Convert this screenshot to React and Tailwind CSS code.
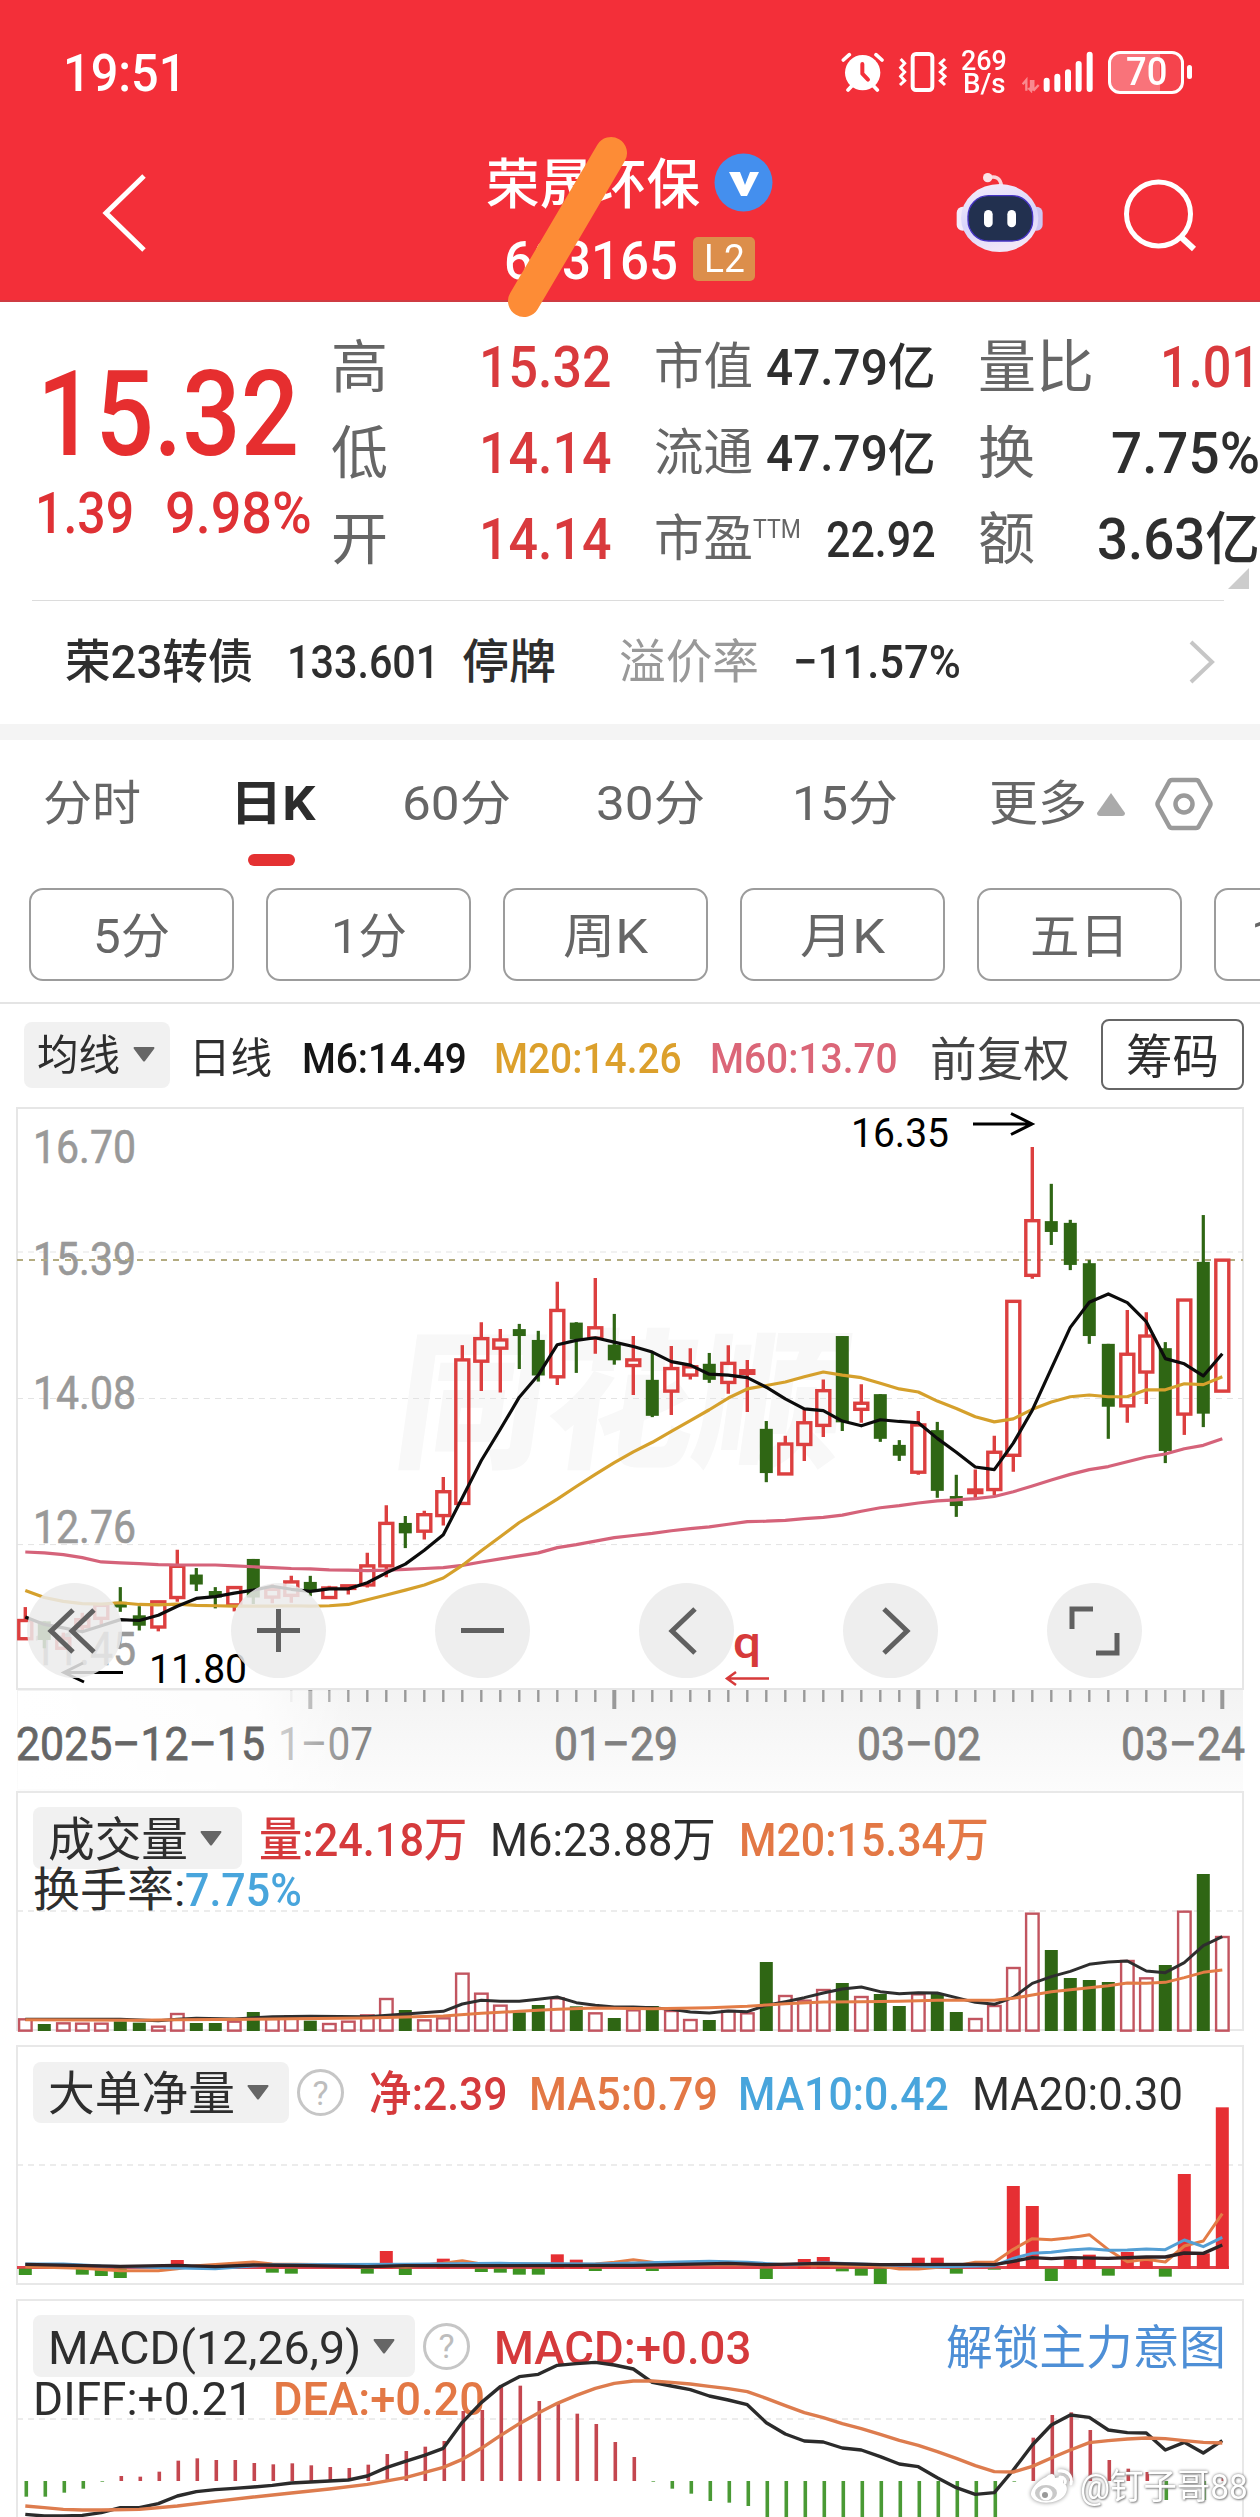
import { useLayoutEffect, useRef, useState } from "react";

const STEP = 19;
const X0 = 25.3;
const cx = (i) => X0 + i * STEP;

const RED = "#dc3f3f";
const GREEN = "#2f6614";

// [up, bodyTop, bodyBottom, high, low]
const candles = [
    [1, 1198, 1240, 1167, 1240], [0, 1200, 1243, 1200, 1262], [1, 1240, 1262, 1226, 1262],
    [1, 1196, 1212, 1180, 1225], [1, 1163, 1193, 1163, 1210], [0, 1155, 1168, 1121, 1178],
    [0, 1186, 1210, 1165, 1221], [1, 1155, 1213, 1155, 1223], [1, 1073, 1145, 1035, 1155],
    [0, 1092, 1115, 1077, 1130], [0, 1130, 1145, 1121, 1170], [1, 1122, 1162, 1122, 1177],
    [0, 1056, 1145, 1056, 1160], [1, 1126, 1144, 1115, 1158], [1, 1109, 1140, 1095, 1157],
    [0, 1109, 1130, 1095, 1142], [1, 1123, 1145, 1118, 1145], [1, 1118, 1124, 1118, 1138],
    [1, 1072, 1116, 1042, 1122], [1, 974, 1072, 932, 1098], [0, 973, 997, 957, 1031],
    [1, 954, 992, 945, 1011], [1, 901, 956, 867, 979], [1, 597, 928, 563, 928],
    [1, 548, 600, 510, 669], [1, 551, 570, 526, 672], [0, 526, 542, 514, 618],
    [0, 551, 633, 530, 647], [1, 483, 636, 417, 655], [0, 511, 550, 510, 627],
    [1, 523, 547, 408, 583], [0, 562, 598, 491, 608], [1, 597, 610, 542, 678],
    [0, 643, 726, 578, 729], [1, 617, 669, 565, 724], [1, 613, 632, 570, 642],
    [0, 606, 643, 581, 650], [1, 605, 649, 563, 675], [1, 622, 628, 597, 717],
    [0, 756, 858, 738, 879], [1, 791, 860, 772, 860], [1, 742, 792, 710, 830],
    [1, 668, 748, 642, 775], [0, 542, 741, 542, 761], [1, 697, 711, 653, 742],
    [0, 676, 779, 676, 786], [0, 793, 818, 782, 830], [1, 747, 856, 715, 862],
    [0, 759, 899, 740, 915], [0, 911, 934, 862, 959], [1, 897, 903, 850, 918],
    [1, 810, 896, 772, 910], [1, 462, 817, 462, 855], [1, 276, 402, 106, 410],
    [0, 277, 302, 191, 332], [0, 281, 378, 274, 390], [0, 374, 542, 367, 560],
    [0, 560, 705, 560, 779], [1, 584, 703, 482, 742], [1, 542, 625, 487, 699],
    [0, 570, 807, 556, 835], [1, 459, 722, 459, 770], [0, 371, 721, 263, 752],
    [1, 367, 669, 367, 669],
];

const ma6 = [1190, 1207, 1215, 1224, 1210, 1196, 1198, 1186, 1165, 1147, 1143, 1135, 1128, 1119, 1126, 1131, 1125, 1125, 1111, 1088, 1068, 1036, 1000, 915, 829, 757, 683, 632, 562, 552, 546, 556, 566, 579, 601, 609, 630, 632, 638, 660, 687, 710, 714, 738, 749, 735, 739, 742, 778, 810, 844, 850, 789, 713, 617, 522, 464, 445, 465, 509, 594, 606, 634, 583];
const ma20 = [1129, 1145, 1154, 1159, 1160, 1157, 1161, 1162, 1160, 1163, 1164, 1165, 1165, 1165, 1164, 1165, 1164, 1161, 1150, 1139, 1128, 1116, 1100, 1071, 1037, 1005, 972, 945, 918, 889, 861, 834, 809, 787, 762, 737, 712, 685, 664, 656, 648, 636, 625, 632, 638, 651, 664, 671, 692, 709, 728, 740, 733, 711, 694, 682, 678, 682, 682, 666, 666, 652, 654, 636];
const ma60 = [1040, 1042, 1046, 1053, 1063, 1065, 1067, 1069, 1070, 1070, 1070, 1072, 1074, 1076, 1078, 1079, 1081, 1082, 1083, 1082, 1080, 1078, 1076, 1071, 1063, 1056, 1049, 1042, 1030, 1023, 1015, 1007, 1002, 997, 991, 986, 982, 976, 970, 969, 967, 963, 960, 955, 946, 938, 933, 927, 922, 920, 917, 912, 901, 888, 874, 861, 850, 843, 832, 821, 814, 802, 794, 779];

// volume: [up, top]
const volumes = [
    [1, 715], [0, 732], [1, 727], [1, 728], [1, 728], [0, 724], [0, 728], [1, 737],
    [1, 699], [0, 729], [0, 729], [1, 722], [0, 696], [1, 714], [1, 706], [0, 722],
    [1, 729], [1, 722], [1, 703], [1, 654], [0, 690], [1, 718], [1, 712], [1, 578],
    [1, 638], [1, 674], [0, 697], [0, 675], [1, 652], [0, 679], [1, 697], [0, 714],
    [1, 688], [0, 678], [1, 690], [1, 717], [0, 720], [1, 690], [1, 697], [0, 546],
    [1, 645], [1, 659], [1, 627], [0, 609], [1, 648], [0, 642], [0, 678], [1, 640],
    [0, 642], [0, 696], [1, 714], [1, 675], [1, 561], [1, 398], [0, 510], [0, 594],
    [0, 600], [0, 606], [1, 540], [1, 592], [0, 555], [1, 392], [0, 282], [1, 468],
];
const vol6 = [[0, 718], [5, 718], [7, 722], [8, 718], [9, 715], [11, 717], [13, 710], [15, 709], [18, 710], [20, 702], [22, 694], [23, 672], [24, 661], [25, 664], [26, 664], [27, 658], [28, 651], [29, 668], [30, 676], [31, 681], [32, 681], [33, 683], [34, 688], [35, 696], [36, 699], [37, 693], [38, 695], [39, 676], [40, 665], [41, 653], [42, 639], [43, 627], [44, 621], [45, 635], [46, 641], [47, 638], [48, 639], [49, 653], [50, 667], [51, 673], [52, 652], [53, 610], [54, 590], [55, 574], [56, 553], [57, 546], [58, 543], [59, 573], [60, 578], [61, 548], [62, 497], [63, 470]];
const vol20 = [[0, 719], [6, 721], [8, 719], [12, 718], [14, 716], [18, 714], [20, 711], [22, 708], [24, 700], [26, 694], [28, 688], [30, 684], [33, 686], [36, 683], [38, 679], [39, 675], [40, 671], [42, 666], [44, 665], [46, 664], [48, 661], [51, 661], [52, 655], [53, 645], [54, 635], [55, 629], [56, 623], [57, 617], [58, 609], [59, 610], [60, 607], [61, 593], [62, 577], [63, 570]];

// big order net: index -> value, above 446 is inflow
const net = [[0, 465], [3, 464], [4, 468], [5, 474], [8, 420], [11, 428], [13, 458], [14, 461], [18, 461], [19, 393], [20, 465], [22, 416], [24, 456], [25, 458], [26, 464], [27, 464], [28, 403], [29, 419], [30, 453], [33, 453], [39, 477], [41, 417], [42, 411], [43, 454], [44, 467], [45, 492], [47, 413], [48, 413], [49, 461], [51, 449], [52, 198], [53, 258], [54, 483], [55, 418], [56, 404], [57, 467], [58, 396], [59, 423], [60, 470], [61, 162], [62, 400], [63, -38]];
const net5 = [[0, 440], [3, 445], [5, 452], [7, 452], [8, 446], [9, 437], [11, 430], [12, 426], [13, 432], [18, 435], [20, 440], [22, 430], [23, 422], [24, 432], [28, 433], [30, 432], [31, 427], [32, 419], [33, 427], [34, 434], [40, 434], [45, 438], [46, 447], [47, 447], [49, 437], [50, 427], [51, 427], [52, 388], [53, 356], [54, 359], [55, 353], [56, 344], [57, 389], [58, 425], [59, 418], [60, 426], [61, 378], [62, 363], [63, 281]];
const net10 = [[0, 432], [2, 432], [4, 438], [8, 444], [10, 446], [13, 434], [20, 433], [25, 430], [30, 432], [36, 424], [38, 427], [40, 434], [42, 428], [45, 434], [48, 440], [51, 437], [52, 415], [53, 400], [54, 397], [55, 390], [56, 386], [57, 391], [58, 390], [59, 387], [60, 389], [61, 360], [62, 380], [63, 352]];
const net20 = [[0, 433], [5, 439], [8, 436], [10, 440], [12, 435], [15, 437], [18, 440], [20, 437], [25, 437], [32, 436], [37, 430], [39, 434], [42, 430], [45, 434], [50, 433], [51, 434], [52, 424], [53, 413], [54, 416], [55, 413], [57, 415], [59, 411], [60, 411], [61, 399], [62, 400], [63, 375]];

const macd = [1130, 1130, 1118, 1106, 1085, 1068, 1070, 1055, 1022, 1015, 1020, 1020, 1029, 1033, 1030, 1036, 1041, 1044, 1034, 1002, 993, 980, 963, 873, 870, 795, 797, 843, 846, 881, 912, 966, 1011, 1085, 1106, 1121, 1143, 1148, 1158, 1192, 1196, 1200, 1200, 1200, 1200, 1200, 1200, 1200, 1200, 1200, 1200, 1192, 1085, 953, 885, 877, 930, 1020, 1046, 1056, 1140, 1085, 1140, 1068];
const diff = [1183, 1188, 1188, 1186, 1178, 1163, 1163, 1151, 1128, 1115, 1109, 1105, 1101, 1096, 1089, 1086, 1083, 1080, 1068, 1043, 1024, 1006, 985, 907, 848, 800, 770, 763, 736, 731, 727, 735, 747, 787, 798, 809, 828, 840, 854, 908, 942, 963, 966, 984, 990, 1010, 1032, 1040, 1073, 1103, 1123, 1118, 1050, 975, 915, 885, 892, 930, 938, 939, 990, 967, 999, 962];
const dea = [[0, 1158], [1, 1163], [2, 1168], [3, 1170], [4, 1170], [6, 1168], [8, 1158], [10, 1144], [12, 1131], [14, 1119], [16, 1107], [18, 1093], [20, 1073], [22, 1042], [23, 1018], [24, 985], [25, 947], [26, 911], [27, 879], [28, 850], [29, 826], [30, 805], [31, 790], [32, 783], [33, 783], [34, 787], [35, 792], [36, 799], [37, 806], [38, 815], [39, 835], [40, 857], [41, 878], [42, 893], [43, 911], [44, 926], [45, 943], [46, 961], [47, 976], [48, 995], [49, 1015], [50, 1037], [51, 1055], [52, 1056], [53, 1039], [54, 1014], [55, 990], [56, 968], [57, 962], [58, 957], [59, 954], [60, 956], [61, 962], [62, 967], [63, 969]];

const toPoints = (data, y) =>
    data
        .map((d, i) => (Array.isArray(d) ? `${cx(d[0])},${y(d[1])}` : `${cx(i)},${y(d)}`))
        .join(" ");

// Condenses its text to a given width
function Fit({ w, className = "", children }) {
    const ref = useRef(null);
    const [k, setK] = useState(1);

    useLayoutEffect(() => {
        setK(w / ref.current.offsetWidth);
    }, [w]);

    return (
        <span className={`block shrink-0 whitespace-nowrap ${className}`} style={{ width: w }}>
            <span
                ref={ref}
                className="inline-block origin-left whitespace-nowrap"
                style={{ transform: `scaleX(${k})` }}
            >
                {children}
            </span>
        </span>
    );
}

function Line({ data, y, color, width = 3 }) {
    return (
        <polyline
            points={toPoints(data, y)}
            fill="none"
            stroke={color}
            strokeWidth={width}
            strokeLinejoin="round"
        />
    );
}

function Down({ className = "" }) {
    return (
        <svg className={`shrink-0 ${className}`} width="22" height="15" viewBox="0 0 22 15">
            <path d="M1 0h20q1 1 0 2L12 14q-1 1-2 0L1 2Q0 1 1 0Z" fill="#666" />
        </svg>
    );
}

function Help({ className = "" }) {
    return (
        <span
            className={`flex size-[47px] shrink-0 items-center justify-center rounded-full border-[3px] border-[#c6c6c6] text-[34px] leading-none text-[#bdbdbd] ${className}`}
        >
            ?
        </span>
    );
}

function StatusBar() {
    return (
        <div className="flex h-[144px] items-center pl-[63px] text-white">
            <Fit w={123} className="mt-[2px] text-[51px] font-medium leading-none">19:51</Fit>
            <svg className="ml-[655px]" width="43" height="40" viewBox="33 36 129 120">
                <circle cx="98" cy="98" r="53" fill="#fff" />
                <path d="M40 60L58 44M156 60L138 44M54 150l12-13M142 150l-12-13" stroke="#fff" strokeWidth="11" strokeLinecap="round" />
                <path d="M97 72v29l17 18" fill="none" stroke="#f32f39" strokeWidth="12" strokeLinecap="round" strokeLinejoin="round" />
            </svg>
            <svg className="ml-[14px]" width="50" height="40" viewBox="203 36 150 120">
                <rect x="247" y="42" width="59" height="108" rx="10" fill="none" stroke="#fff" strokeWidth="12" />
                <path d="M211 57l12 13-12 13 12 13-12 13 12 13-14 13M344 57l-14 13 14 13-14 13 14 13-14 13 14 13" fill="none" stroke="#fff" strokeWidth="9" />
            </svg>
            <div className="ml-[13px] w-[46px]">
                <Fit w={46} className="h-[24px] text-[28px] font-medium leading-[26px]">269</Fit>
                <Fit w={42} className="ml-[2px] h-[24px] text-[27px] font-medium leading-[24px]">B/s</Fit>
            </div>
            <svg className="ml-[15px]" width="73" height="42" viewBox="578 34 219 126">
                <path d="M580 134l11-13v32M605 121v32l-8-8M612 153v-32M612 153l16-17" fill="none" stroke="#f98a8f" strokeWidth="7" />
                <path d="M652 123v25M684 111v37M716 98v50M748 73v75M781 45v103" stroke="#fff" strokeWidth="18" strokeLinecap="round" />
            </svg>
            <div className="ml-[13px] flex h-[43px] w-[76px] items-center justify-center rounded-[12px] border-[3.5px] border-white bg-[linear-gradient(90deg,#f9737a_70%,#f5444d_70%)]">
                <Fit w={41} className="text-[39px] font-medium leading-none">70</Fit>
            </div>
            <div className="ml-[3px] h-[14px] w-[5px] rounded-full bg-white" />
        </div>
    );
}

function Header() {
    return (
        <header className="relative h-[302px] border-b-2 border-[#cf3b42] bg-[#f32f39]">
            <StatusBar />
            <div className="flex h-[156px] items-start text-white">
                <svg className="ml-[100px] mt-[28px]" width="50" height="82" viewBox="0 0 50 82">
                    <path d="M44 4L6 41l38 37" fill="none" stroke="#fff" strokeWidth="5" />
                </svg>
                <div className="ml-[336px] w-[306px]">
                    <div className="mt-[9px] flex h-[59px] items-center">
                        <Fit w={214} className="mt-[6px] text-[54px] font-medium leading-none">荣晟环保</Fit>
                        <svg className="ml-[14px]" width="59" height="59" viewBox="0 0 59 59">
                            <circle cx="29.500" cy="29.500" r="29" fill="#448fee" />
                            <path d="M15 19h11l5 13 5-13h9L33 43h-6Z" fill="#fff" />
                        </svg>
                    </div>
                    <div className="mt-[25px] flex h-[44px] items-center pl-[18px]">
                        <Fit w={174} className="mt-[3px] text-[54px] font-medium leading-none">603165</Fit>
                        <span className="ml-[15px] flex h-[44px] w-[62px] items-center justify-center rounded-[5px] bg-[#dc8e4b]">
                            <Fit w={41} className="text-[38px] leading-none">L2</Fit>
                        </span>
                    </div>
                </div>
                <svg className="ml-[164px] mt-[28px]" width="88" height="82" viewBox="378 396 264 246">
                    <defs>
                        <linearGradient id="shell" x1="0" y1="0" x2="0.3" y2="1">
                            <stop offset="0" stopColor="#f7effb" />
                            <stop offset="0.6" stopColor="#d9d4fa" />
                            <stop offset="1" stopColor="#f0e6f8" />
                        </linearGradient>
                    </defs>
                    <path d="M474 414c22-8 38 0 40 24" fill="none" stroke="#fbd5da" strokeWidth="11" />
                    <circle cx="473" cy="413" r="14" fill="#fbe3e8" />
                    <rect x="380" y="500" width="36" height="72" rx="18" fill="#f3eafa" />
                    <rect x="602" y="500" width="36" height="72" rx="18" fill="#cdc6f2" />
                    <ellipse cx="509" cy="534" rx="116" ry="102" fill="url(#shell)" />
                    <rect x="414" y="467" width="194" height="136" rx="62" fill="#22304f" stroke="#4634c4" strokeWidth="4" />
                    <rect x="462" y="510" width="26" height="52" rx="13" fill="#fff" />
                    <rect x="532" y="510" width="26" height="52" rx="13" fill="#fff" />
                </svg>
                <svg className="ml-[78px] mt-[34px]" width="76" height="76" viewBox="0 0 76 76">
                    <circle cx="36.500" cy="36" r="32" fill="none" stroke="#fff" strokeWidth="5" />
                    <path d="M59 59l13 12" stroke="#fff" strokeWidth="6" />
                </svg>
            </div>
            {/* marker stroke over the stock name */}
            <svg className="absolute left-[490px] top-[120px] z-10" width="160" height="210" viewBox="0 0 160 210">
                <path d="M121 33L34 181" stroke="#fd8c36" strokeWidth="32" strokeLinecap="round" />
            </svg>
        </header>
    );
}

const quotes = [
    { a: "高", av: "15.32", b: "市值", bv: "47.79亿", bw: 170, c: "量比", cw: 116, cv: "1.01", cvw: 100, red: true },
    { a: "低", av: "14.14", b: "流通", bv: "47.79亿", bw: 170, c: "换", cw: 57, cv: "7.75%", cvw: 149 },
    { a: "开", av: "14.14", b: "市盈", ttm: true, bv: "22.92", bw: 110, c: "额", cw: 57, cv: "3.63亿", cvw: 163 },
];

function Quote() {
    return (
        <section className="relative flex h-[298px] pt-[22px] text-[#2e2e2e]">
            <div className="w-[331px] text-[#df3135]">
                <Fit w={262} className="ml-[37px] mt-[32px] h-[118px] text-[118px] font-medium leading-[118px] text-[#e62e2f]">15.32</Fit>
                <div className="mt-[9px] flex h-[60px] items-center pl-[35px] text-[58px] font-medium leading-none">
                    <Fit w={99}>1.39</Fit>
                    <Fit w={147} className="ml-[31px]">9.98%</Fit>
                </div>
            </div>
            <div className="w-[929px]">
                {quotes.map((q) => (
                    <div key={q.a} className="flex h-[86px] items-center leading-none">
                        <span className="w-[148px] text-[57px] text-[#666]">{q.a}</span>
                        <Fit w={132} className="text-[57px] font-medium text-[#d93a3d]">{q.av}</Fit>
                        <div className="ml-[43px] flex w-[282px] items-center justify-between">
                            <span className="flex items-center text-[#666]">
                                <Fit w={99} className="text-[50px]">{q.b}</Fit>
                                {q.ttm && <Fit w={48} className="-mt-[19px] text-[25px]">TTM</Fit>}
                            </span>
                            <Fit w={q.bw} className="mt-[2px] text-[50px] font-medium">{q.bv}</Fit>
                        </div>
                        <div className="ml-[42px] flex w-[282px] items-center justify-between">
                            <Fit w={q.cw} className="text-[57px] text-[#666]">{q.c}</Fit>
                            <Fit w={q.cvw} className={q.red ? "text-[57px] font-medium text-[#d93a3d]" : "text-[57px] font-medium"}>{q.cv}</Fit>
                        </div>
                    </div>
                ))}
            </div>
            <svg className="absolute bottom-[11px] right-[11px]" width="21" height="21" viewBox="0 0 21 21">
                <path d="M21 0v21H0Z" fill="#ccc" />
            </svg>
        </section>
    );
}

function BondRow() {
    return (
        <div className="flex h-[121px] items-center pl-[65px] text-[47px] font-medium leading-none text-[#2e2e2e]">
            <Fit w={188}>荣23转债</Fit>
            <Fit w={152} className="ml-[34px]">133.601</Fit>
            <Fit w={94} className="ml-[23px]">停牌</Fit>
            <Fit w={140} className="ml-[63px] font-normal text-[#999]">溢价率</Fit>
            <Fit w={168} className="ml-[34px]">−11.57%</Fit>
            <svg className="ml-[227px]" width="28" height="44" viewBox="0 0 28 44">
                <path d="M3 2l21 20L3 42" fill="none" stroke="#c6c6c6" strokeWidth="4" />
            </svg>
        </div>
    );
}

function Tabs() {
    return (
        <nav className="h-[148px] text-[48px] leading-none text-[#666]">
            <div className="flex h-[128px] items-center pl-[43px]">
                <Fit w={98}>分时</Fit>
                <div className="relative ml-[89px] font-bold text-[#2c2c2c]">
                    <Fit w={86}>日K</Fit>
                    <span className="absolute left-[18px] top-[74px] h-[12px] w-[47px] rounded-full bg-[#e43132]" />
                </div>
                <Fit w={109} className="ml-[86px]">60分</Fit>
                <Fit w={109} className="ml-[85px]">30分</Fit>
                <Fit w={106} className="ml-[87px]">15分</Fit>
                <Fit w={98} className="ml-[91px]">更多</Fit>
                <svg className="ml-[10px]" width="28" height="23" viewBox="0 0 28 23">
                    <path d="M14 0l14 20q0 3-3 3H3q-3 0-3-3Z" fill="#aaa" />
                </svg>
                <svg className="ml-[30px]" width="58" height="54" viewBox="0 0 58 54">
                    <path d="M17 3h24q2 0 3 2l11 20q1 2 0 4L44 49q-1 2-3 2H17q-2 0-3-2L3 29q-1-2 0-4L14 5q1-2 3-2Z" fill="none" stroke="#9a9a9a" strokeWidth="4.500" />
                    <circle cx="29" cy="27" r="8.500" fill="none" stroke="#9a9a9a" strokeWidth="4.500" />
                </svg>
            </div>
        </nav>
    );
}

const periods = [["5分", 77], ["1分", 76], ["周K", 85], ["月K", 85], ["五日", 99], ["120分", 132]];

function Periods() {
    return (
        <div className="flex h-[116px] gap-[32px] overflow-hidden border-b-2 border-[#e4e4e4] pl-[29px]">
            {periods.map(([label, w]) => (
                <div
                    key={label}
                    className="flex h-[93px] w-[205px] shrink-0 items-center justify-center rounded-[14px] border-2 border-[#9c9c9c] pt-[4px] text-[48px] leading-none text-[#666]"
                >
                    <Fit w={w}>{label}</Fit>
                </div>
            ))}
        </div>
    );
}

function MaRow() {
    return (
        <div className="flex h-[101px] items-center pl-[24px] leading-none text-[#2e2e2e]">
            <div className="flex h-[66px] w-[146px] items-center rounded-[8px] bg-[#f1f1f1] pl-[13px]">
                <Fit w={83} className="mt-[3px] text-[42px]">均线</Fit>
                <Down className="ml-[13px]" />
            </div>
            <Fit w={83} className="ml-[19px] mt-[9px] text-[42px]">日线</Fit>
            <Fit w={165} className="ml-[30px] mt-[9px] text-[42px] font-medium text-[#151515]">M6:14.49</Fit>
            <Fit w={188} className="ml-[27px] mt-[9px] text-[42px] font-medium text-[#dca02c]">M20:14.26</Fit>
            <Fit w={188} className="ml-[28px] mt-[9px] text-[42px] font-medium text-[#db6678]">M60:13.70</Fit>
            <Fit w={140} className="ml-[32px] mt-[9px] text-[47px] text-[#444]">前复权</Fit>
            <div className="ml-[31px] flex h-[71px] w-[143px] shrink-0 items-center justify-center rounded-[8px] border-2 border-[#666]">
                <Fit w={93} className="mt-[3px] text-[47px]">筹码</Fit>
            </div>
        </div>
    );
}

const axisPrices = [["16.70", 1162], ["15.39", 1274], ["14.08", 1408], ["12.76", 1542], ["11.45", 1664]];

function RoundButton({ children }) {
    return (
        <button className="flex size-[95px] items-center justify-center rounded-full bg-[#ebebeb]/85">
            <svg width="95" height="95" viewBox="0 0 95 95" fill="none" stroke="#606060" strokeWidth="5">
                {children}
            </svg>
        </button>
    );
}

function KChart() {
    const y = (v) => 1100 + v / 2.306;
    return (
        <section className="relative h-[686px]">
            <svg className="block" width="1260" height="686" viewBox="0 1104 1260 686">
                <defs>
                    <linearGradient id="fade" x1="0" y1="0" x2="0" y2="1">
                        <stop offset="0" stopColor="#f3f3f3" />
                        <stop offset="1" stopColor="#fcfcfc" />
                    </linearGradient>
                    <linearGradient id="veil" x1="0" y1="0" x2="1" y2="0">
                        <stop offset="0" stopColor="#fff" />
                        <stop offset="0.7" stopColor="#fff" stopOpacity="0.8" />
                        <stop offset="1" stopColor="#fff" stopOpacity="0" />
                    </linearGradient>
                </defs>
                <rect x="17" y="1107" width="1226" height="581" fill="none" stroke="#e6e6e6" strokeWidth="2" />
                <rect x="17" y="1689" width="1226" height="101" fill="url(#fade)" />
                <text x="390" y="1455" fontSize="150" fontWeight="900" fill="#f8f8f8" textLength="450" transform="skewX(-8)" style={{ transformOrigin: "390px 1455px" }}>同花顺</text>

                {[1251, 1397.5, 1543.6].map((v) => (
                    <path key={v} d={`M17 ${v}H1243`} stroke="#e3e3e3" strokeWidth="1" strokeDasharray="6 5" />
                ))}

                {axisPrices.map(([label, by]) => (
                    <text key={label} x="33" y={by} fontSize="47" fill="#999" textLength="103" lengthAdjust="spacingAndGlyphs" stroke="#999" strokeWidth="0.6">{label}</text>
                ))}
                <path d="M17 1259H1243" stroke="#b3ab80" strokeWidth="2" strokeDasharray="6 6" />

                {candles.map(([up, top, bottom, high, low], i) =>
                    up ? (
                        <g key={i} stroke={RED} strokeWidth="3.4" fill="none">
                            <path d={`M${cx(i)} ${y(high)}V${y(top)}M${cx(i)} ${y(bottom)}V${y(low)}`} />
                            <rect x={cx(i) - 6.5} y={y(top)} width="13" height={y(bottom) - y(top)} />
                        </g>
                    ) : (
                        <g key={i} fill={GREEN}>
                            <rect x={cx(i) - 1.6} y={y(high)} width="3.2" height={y(low) - y(high)} />
                            <rect x={cx(i) - 6.5} y={y(top)} width="13" height={y(bottom) - y(top)} />
                        </g>
                    )
                )}

                <Line data={ma60} y={y} color="#d5637a" width={3.2} />
                <Line data={ma20} y={y} color="#d5a02c" width={3.2} />
                <Line data={ma6} y={y} color="#0c0c0c" width={3.2} />

                <g fill="none" stroke="#000" strokeWidth="3">
                    <path d="M973 1123h59M1011 1112.500l21 10.500-21 10.500" />
                    <path d="M123 1671.500H64M83 1662l-19 9.500 20 9.500" />
                </g>
                <text x="851" y="1146" fontSize="40" fill="#000" textLength="98" lengthAdjust="spacingAndGlyphs">16.35</text>
                <text x="149" y="1682" fontSize="40" fill="#000" textLength="98" lengthAdjust="spacingAndGlyphs">11.80</text>
                <text x="733" y="1657" fontSize="44" fontWeight="500" fill="#d63a3a" textLength="28" lengthAdjust="spacingAndGlyphs">q</text>
                <path d="M769 1677.500H727M736 1671l-9 6.500 9 6.500" fill="none" stroke="#d63a3a" strokeWidth="2.500" />

                {candles.map((_, i) =>
                    i < 14 ? null : (
                        <rect
                            key={i}
                            x={cx(i) - (i % 16 === 15 ? 2 : 1.2)}
                            y="1689"
                            width={i % 16 === 15 ? 4 : 2.4}
                            height={i % 16 === 15 ? 19 : 12}
                            fill={i === 14 ? "#ddd" : "#999"}
                        />
                    )
                )}
                <g fontSize="47" strokeWidth="0.8">
                    <text x="278" y="1759" fill="#868686" textLength="95" lengthAdjust="spacingAndGlyphs">1–07</text>
                    <rect x="18" y="1690" width="339" height="98" fill="url(#veil)" />
                    <text x="16" y="1759" fill="#666" stroke="#666" textLength="249" lengthAdjust="spacingAndGlyphs">2025–12–15</text>
                    <text x="554" y="1759" fill="#808080" stroke="#808080" textLength="124" lengthAdjust="spacingAndGlyphs">01–29</text>
                    <text x="857" y="1759" fill="#808080" stroke="#808080" textLength="124" lengthAdjust="spacingAndGlyphs">03–02</text>
                    <text x="1121" y="1759" fill="#808080" stroke="#808080" textLength="124" lengthAdjust="spacingAndGlyphs">03–24</text>
                </g>
            </svg>
            <div className="absolute left-[27px] top-[478px] flex gap-[109px]">
                <RoundButton><path d="M46 27L24 48l22 21M67 27L45 48l22 21" /></RoundButton>
                <RoundButton><path d="M26 47.500h43M47.500 26v43" /></RoundButton>
                <RoundButton><path d="M26 47.500h43" /></RoundButton>
                <RoundButton><path d="M56 26L33 48l23 22" /></RoundButton>
                <RoundButton><path d="M41 26l23 22-23 22" /></RoundButton>
                <RoundButton><path d="M46 26H25v20M49 70h21V50" /></RoundButton>
            </div>
        </section>
    );
}

function VolumePanel() {
    const y = (v) => 1780 + v / 3;
    return (
        <section className="relative h-[253px]">
            <svg className="block" width="1260" height="253" viewBox="0 1791 1260 253">
                <rect x="17" y="1792" width="1226" height="238" fill="#fff" stroke="#e8e8e8" strokeWidth="2" />
                <path d="M17 1911H1243" stroke="#e6e6e6" strokeWidth="1.500" strokeDasharray="6 5" />
                {volumes.map(([up, top], i) =>
                    up ? (
                        <rect key={i} x={cx(i) - 6.2} y={y(top) + 1} width="12.500" height={y(752) - y(top) - 1} fill="none" stroke="#c25560" strokeWidth="2.400" />
                    ) : (
                        <rect key={i} x={cx(i) - 6.5} y={y(top)} width="13" height={y(753) - y(top)} fill={GREEN} />
                    )
                )}
                <Line data={vol6} y={y} color="#2e2e2e" />
                <Line data={vol20} y={y} color="#e37c46" />
            </svg>
            <div className="absolute left-[33px] top-[16px] text-[47px] leading-none text-[#2e2e2e]">
                <div className="flex h-[62px] items-center">
                    <div className="flex h-[62px] w-[209px] items-center rounded-[8px] bg-[#f1f1f1] pl-[15px]">
                        <Fit w={140} className="mt-[2px]">成交量</Fit>
                        <Down className="ml-[12px]" />
                    </div>
                    <Fit w={208} className="ml-[17px] mt-[2px] font-medium text-[#d53a3c]">量:24.18万</Fit>
                    <Fit w={226} className="ml-[23px] mt-[2px]">M6:23.88万</Fit>
                    <Fit w={250} className="ml-[23px] mt-[2px] font-medium text-[#e37845]">M20:15.34万</Fit>
                </div>
                <div className="mt-[-3px] flex h-[47px] items-center">
                    <Fit w={152}>换手率:</Fit>
                    <Fit w={117} className="font-medium text-[#48a5dc]">7.75%</Fit>
                </div>
            </div>
        </section>
    );
}

function NetPanel() {
    const y = (v) => 2120 + v / 3;
    return (
        <section className="relative h-[255px]">
            <svg className="block" width="1260" height="255" viewBox="0 2044 1260 255">
                <rect x="17" y="2046" width="1226" height="238" fill="none" stroke="#e8e8e8" strokeWidth="2" />
                <path d="M17 2165H1243" stroke="#e6e6e6" strokeWidth="1.500" strokeDasharray="6 5" />
                <rect x="17" y="2266" width="1212" height="3" fill="#e0434c" />
                {net.map(([i, v]) => (
                    <rect
                        key={i}
                        x={cx(i) - 6.5}
                        y={v < 446 ? y(v) : y(446)}
                        width="13"
                        height={Math.abs(v - 446) / 3}
                        fill={v < 446 ? "#e62f33" : "#3c9422"}
                    />
                ))}
                <Line data={net5} y={y} color="#e37c46" />
                <Line data={net10} y={y} color="#549fd4" />
                <Line data={net20} y={y} color="#2e2326" width={3.4} />
            </svg>
            <div className="absolute left-[33px] top-[18px] flex h-[61px] items-center text-[47px] leading-none text-[#2e2e2e]">
                <div className="flex h-[61px] w-[256px] items-center rounded-[8px] bg-[#f1f1f1] pl-[15px]">
                    <Fit w={187} className="mt-[2px]">大单净量</Fit>
                    <Down className="ml-[12px]" />
                </div>
                <Help className="ml-[8px]" />
                <Fit w={139} className="ml-[25px] mt-[2px] font-medium text-[#d53a3c]">净:2.39</Fit>
                <Fit w={189} className="ml-[21px] mt-[2px] font-medium text-[#e37845]">MA5:0.79</Fit>
                <Fit w={211} className="ml-[20px] mt-[2px] font-medium text-[#48a5dc]">MA10:0.42</Fit>
                <Fit w={211} className="ml-[23px] mt-[2px]">MA20:0.30</Fit>
            </div>
        </section>
    );
}

function MacdPanel() {
    const y = (v) => 2120 + v / 3;
    return (
        <section className="relative h-[218px] overflow-hidden">
            <svg className="block" width="1260" height="218" viewBox="0 2299 1260 218">
                <rect x="17" y="2300" width="1226" height="240" fill="none" stroke="#e8e8e8" strokeWidth="2" />
                <path d="M17 2419H1243" stroke="#e6e6e6" strokeWidth="1.500" strokeDasharray="6 5" />
            </svg>
            <div className="absolute left-[33px] top-[16px] text-[47px] leading-none text-[#2e2e2e]">
                <div className="flex h-[62px] items-center">
                    <div className="flex h-[62px] w-[382px] items-center rounded-[8px] bg-[#f1f1f1] pl-[15px]">
                        <Fit w={313} className="mt-[2px]">MACD(12,26,9)</Fit>
                        <Down className="ml-[12px]" />
                    </div>
                    <Help className="ml-[8px]" />
                    <Fit w={257} className="ml-[24px] mt-[2px] font-medium text-[#d53a3c]">MACD:+0.03</Fit>
                    <Fit w={280} className="ml-[195px] mt-[2px] text-[#4e8fd6]">解锁主力意图</Fit>
                </div>
                <div className="mt-[-2px] flex h-[47px] items-center">
                    <Fit w={220}>DIFF:+0.21</Fit>
                    <Fit w={212} className="ml-[20px] font-medium text-[#e37845]">DEA:+0.20</Fit>
                </div>
            </div>
            <svg className="absolute left-0 top-0" width="1260" height="218" viewBox="0 2299 1260 218">
                {macd.map((v, i) => (
                    <path key={i} d={`M${cx(i) + 1} ${y(1083)}V${y(v)}`} stroke={v > 1083 ? "#4a9a35" : "#c4474f"} strokeWidth="3.600" />
                ))}
                <Line data={diff} y={y} color="#2b2b2b" width={3.4} />
                <Line data={dea} y={y} color="#dd7c4e" width={3.4} />
            </svg>
            <div className="absolute left-[1030px] top-[169px] flex items-center gap-[5px] text-white">
                <svg className="drop-shadow-[0_0_2px_#888]" width="45" height="40" viewBox="0 0 45 40">
                    <path d="M16 9c4-4 9-4 9 1 6-2 10 0 8 5 5 2 5 8 1 13-8 9-30 9-33-1C0 21 9 12 16 9Z" fill="#fff" />
                    <ellipse cx="16" cy="25" rx="11" ry="8" fill="#c9c9c9" />
                    <circle cx="16" cy="26" r="6.500" fill="#fff" />
                    <circle cx="15" cy="27" r="3" fill="#999" />
                    <path d="M29 3c8-1 14 5 12 13M30 9c4 0 6 3 5 6" fill="none" stroke="#fff" strokeWidth="3" strokeLinecap="round" />
                </svg>
                <Fit w={168} className="text-[35px] leading-[40px] [text-shadow:0_0_3px_#777,1px_1px_2px_#999]">@钉子哥88</Fit>
            </div>
        </section>
    );
}

export default function App() {
    return (
        <div className="flex h-[2517px] w-[1260px] flex-col overflow-hidden bg-white font-[Roboto,'Noto_Sans_CJK_SC',sans-serif]">
            <Header />
            <Quote />
            <div className="ml-[32px] mr-[36px] h-[1px] bg-[#dcdcdc]" />
            <div className="h-[123px]">
                <BondRow />
            </div>
            <div className="h-[16px] shrink-0 bg-[#f4f4f4]" />
            <Tabs />
            <Periods />
            <MaRow />
            <KChart />
            <VolumePanel />
            <NetPanel />
            <MacdPanel />
        </div>
    );
}
